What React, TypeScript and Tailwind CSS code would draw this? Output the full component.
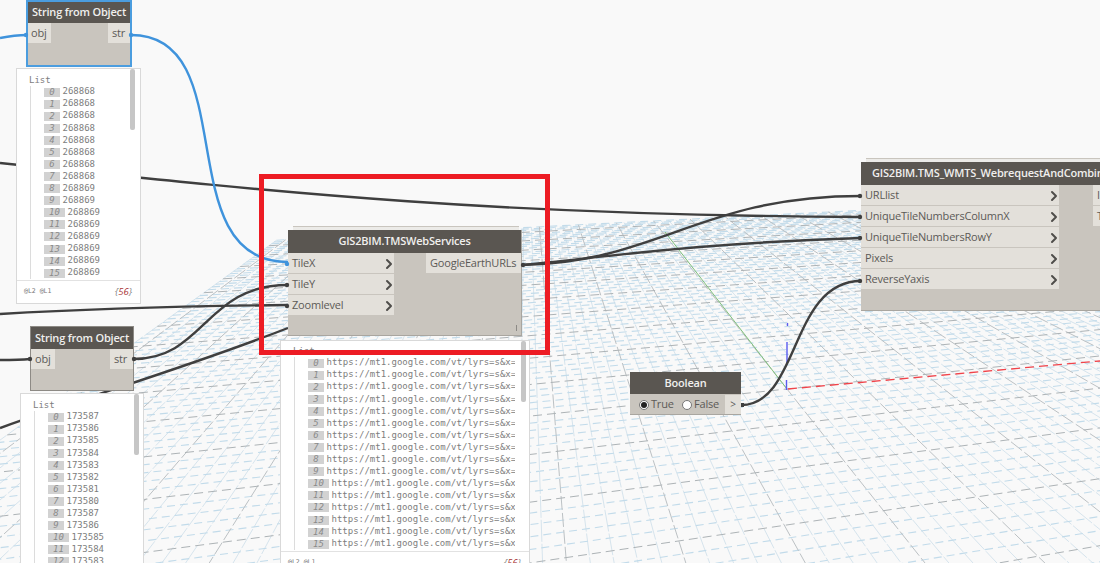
import { ChevronRight } from 'lucide-react';

const NODE_FONT = "font-['Open_Sans',sans-serif]";

// grid is a homography built from the two vanishing points of the 3D view
const ORIGIN = [787, 389];
const VP_A = [4000, 50];
const VP_B = [526, 60];
const ALPHA = 0.045;
const BETA = 0.09;

const project = (u: number, v: number) => {
  const a = ALPHA * u;
  const b = BETA * v;
  const d = 1 + a + b;
  return [
    (ORIGIN[0] + a * VP_A[0] + b * VP_B[0]) / d,
    (ORIGIN[1] + a * VP_A[1] + b * VP_B[1]) / d,
  ];
};

const U_MIN = -4.6;
const U_MAX = 12;
const V_MIN = -8;
const V_MAX = 11.6;

const seg = (a: number[], b: number[]) => `M${a[0].toFixed(1)} ${a[1].toFixed(1)}L${b[0].toFixed(1)} ${b[1].toFixed(1)}`;

const Grid = () => {
  const minorU: string[] = [];
  const majorU: string[] = [];
  const minorV: string[] = [];
  const majorV: string[] = [];
  for (let i = Math.ceil(U_MIN * 10); i <= U_MAX * 10; i++) {
    (i % 5 === 0 ? majorU : minorU).push(seg(project(i / 10, V_MIN), project(i / 10, V_MAX)));
  }
  for (let i = V_MIN * 5; i <= V_MAX * 5; i++) {
    (i % 5 === 0 ? majorV : minorV).push(seg(project(U_MIN, i / 5), project(U_MAX, i / 5)));
  }
  return (
    <svg className="absolute inset-0" width={1100} height={563} fill="none">
      <path d={minorU.join('')} stroke="#d6e4ed" strokeWidth={1} strokeDasharray="22 2" />
      <path d={minorV.join('')} stroke="#c2dbea" strokeWidth={1.1} strokeDasharray="8 5" />
      <path d={majorU.join('')} stroke="#bcc1c4" strokeWidth={1} strokeDasharray="14 3" />
      <path d={majorV.join('')} stroke="#adb3b6" strokeWidth={1} strokeDasharray="9 5" />
      {/* axes */}
      <path d="M787 389L665 232" stroke="#7fbf7a" strokeWidth={1} />
      <path d="M788 389L1100 361" stroke="#f0434a" strokeWidth={1.3} strokeDasharray="9 5" />
      <path d="M786.5 380V390M787 342V363M787.5 323V326" stroke="#5a5cf0" strokeWidth={1.4} />
    </svg>
  );
};

const Wires = () => (
  <svg className="absolute inset-0" width={1100} height={563} fill="none">
    <g stroke="#3f3f3f" strokeWidth={2.4}>
      <path d="M0 163C300 195 500 215 861 217" />
      <path d="M0 314C100 308 200 306 288 305" />
      <path d="M0 360C10 360 20 360 30 359" />
      <path d="M0 428C100 392 180 370 288 328" />
      <path d="M133 359C205 359 205 285 288 285" />
      <path d="M522 265C660 262 700 196 861 196" />
      <path d="M522 265C600 258 680 244 861 238" />
      <path d="M741 405C800 405 790 281 861 281" />
    </g>
    <g stroke="#3f93dc" strokeWidth={2.4}>
      <path d="M0 38C10 36 18 35 27 35" />
      <path d="M131 35C245 35 167 262 288 262" />
    </g>
  </svg>
);

// the little port stubs sit over the node edges
const PortDots = () => (
  <svg className="absolute inset-0" width={1100} height={563}>
    <g fill="#3f93dc">
      <circle cx={26} cy={35} r={2.2} />
      <circle cx={131} cy={35} r={2.2} />
      <circle cx={287} cy={264} r={2.2} />
    </g>
    <g fill="#3f3f3f">
      <circle cx={30} cy={359} r={2.2} />
      <circle cx={134} cy={359} r={2.2} />
      <circle cx={287} cy={285} r={2.2} />
      <circle cx={287} cy={306} r={2.2} />
      <circle cx={523} cy={265} r={2.2} />
      <circle cx={860} cy={196} r={2.2} />
      <circle cx={860} cy={217} r={2.2} />
      <circle cx={860} cy={238} r={2.2} />
      <circle cx={860} cy={281} r={2.2} />
      <rect x={741} y={403} width={3} height={4} />
    </g>
  </svg>
);

const PORT_TEXT = 'text-[11px] tracking-[-0.2px] text-[#5c5a57] pt-[1px]';

const InPort = ({ name, arrow = true, className = '' }: { name: string; arrow?: boolean; className?: string }) => (
  <div className={`flex items-center justify-between h-[20px] bg-[#e3e0da] pl-[4px] ${PORT_TEXT} ${className}`}>
    <span>{name}</span>
    {arrow && <ChevronRight size={16} strokeWidth={3} className="text-[#4f4d4a] -mr-[3px]" />}
  </div>
);

const OutPort = ({ name, className = '' }: { name: string; className?: string }) => (
  <div className={`flex items-center h-[20px] bg-[#e3e0da] px-[4px] whitespace-nowrap overflow-hidden ${PORT_TEXT} ${className}`}>{name}</div>
);

const Header = ({ title, className = '' }: { title: string; className?: string }) => (
  <div className={`bg-[#5a5651] text-[#f0efed] text-[11px] tracking-[-0.2px] font-semibold whitespace-nowrap flex items-center ${className}`}>{title}</div>
);

const StringFromObject = ({ className }: { className: string }) => (
  <div className={`absolute w-[104px] h-[65px] bg-[#c9c5be] ${NODE_FONT} ${className}`}>
    <Header title="String from Object" className="h-[22px] justify-center" />
    <div className="flex justify-between">
      <InPort name="obj" arrow={false} className="w-[24px]" />
      <OutPort name="str" className="w-[23px]" />
    </div>
  </div>
);

const Row = ({ index, value }: { index: number; value: string }) => (
  <div className="flex items-center h-[12.09px] whitespace-nowrap">
    <span className={`h-[9px] bg-[#d2d2d2] text-[#8a8a8a] italic flex items-center justify-center leading-none shrink-0 ${index > 9 ? 'w-[21px]' : 'w-[16px]'}`}>
      {index}
    </span>
    <span className="ml-[2.5px] text-[#7d7d7d]">{value}</span>
  </div>
);

const Watch = ({ values, className, thumb, clip, footer = true }: { values: string[]; className: string; thumb: string; clip: string; footer?: boolean }) => (
  <div className={`absolute bg-white border border-[#d9d9d9] overflow-hidden flex flex-col font-['DejaVu_Sans_Mono',monospace] text-[9px] ${className}`}>
    <div className="flex-1 min-h-0 pl-[12px] overflow-hidden">
      <div className={`overflow-hidden ${clip}`}>
        <div className="h-[12px] leading-[12px] text-[#7d7d7d]">List</div>
        <div className="border-l border-[#dcdcdc] ml-[1px] pl-[13px]">
          {values.map((v, i) => (
            <Row key={i} index={i} value={v} />
          ))}
        </div>
      </div>
    </div>
    <div className={`absolute top-0 w-[4.5px] h-[61px] bg-[#c6c6c6] rounded-[2px] ${thumb}`} />
    {footer && (
      <div className="h-[23px] shrink-0 border-t border-[#e2e2e2] flex items-center justify-between px-[7px] text-[#777]">
        <span className="text-[6.5px]">@L2 @L1</span>
        <span className={`${NODE_FONT} italic text-[9.5px] text-[#888] pr-[1px]`}>
          {'{'}
          <span className="text-[#a33]">56</span>
          {'}'}
        </span>
      </div>
    )}
  </div>
);

const COLUMNS = ['268868', '268868', '268868', '268868', '268868', '268868', '268868', '268868', '268869', '268869', '268869', '268869', '268869', '268869', '268869', '268869'];
const ROWS = ['173587', '173586', '173585', '173584', '173583', '173582', '173581', '173580', '173587', '173586', '173585', '173584', '173583'];
const URLS = Array.from({ length: 16 }, (_, i) => (i > 9 ? 'https://mt1.google.com/vt/lyrs=s&x' : 'https://mt1.google.com/vt/lyrs=s&x='));

export default function App() {
  return (
    <div className="relative w-[1100px] h-[563px] overflow-hidden bg-[#f9f9f9]">
      <Grid />
      <Wires />

      {/* String from Object, selected */}
      <StringFromObject className="left-[27px] top-[1px] outline-2 -outline-offset-1 outline-[#4b9ddf]" />
      <Watch values={COLUMNS} className="left-[16px] top-[68px] w-[125px] h-[236px] pt-[5px]" thumb="left-[113px]" clip="w-[110px]" />

      <StringFromObject className="left-[30px] top-[326px] border border-[#8d8a85]" />
      <Watch values={ROWS} className="left-[20px] top-[393px] w-[124px] h-[190px] pt-[5px]" thumb="left-[113px]" clip="w-[110px]" footer={false} />

      {/* TMSWebServices */}
      <div className={`absolute left-[288px] top-[230px] w-[234px] h-[106px] bg-[#c9c5be] border-b border-r border-[#a9a6a0] ${NODE_FONT}`}>
        <div className="absolute -top-[4px] left-[5px] right-[2px] h-[4px] border-t border-[#c9c5be] bg-[#ecebe8]" />
        <Header title="GIS2BIM.TMSWebServices" className="h-[23px] justify-center" />
        <div className="flex justify-between">
          <div className="flex flex-col gap-[1px] w-[106px]">
            <InPort name="TileX" />
            <InPort name="TileY" />
            <InPort name="Zoomlevel" />
          </div>
          <OutPort name="GoogleEarthURLs" className="w-[95px]" />
        </div>
        <span className="absolute right-[4px] bottom-[4px] w-[1px] h-[6px] bg-[#8c8a86]" />
      </div>
      <Watch values={URLS} className="left-[280px] top-[340px] w-[250px] h-[235px] pt-[4px]" thumb="left-[240px]" clip="w-[222px]" />

      {/* WebrequestAndCombine */}
      <div className={`absolute left-[861px] top-[162px] w-[400px] h-[149px] bg-[#c9c5be] border-b border-[#a9a6a0] ${NODE_FONT}`}>
        <div className="absolute -top-[4px] left-[5px] right-0 h-[4px] border-t border-[#c9c5be] bg-[#ecebe8]" />
        <Header title="GIS2BIM.TMS_WMTS_WebrequestAndCombineImages" className="h-[23px] pl-[11px]" />
        <div className="flex">
          <div className="flex flex-col gap-[1px] w-[198px]">
            <InPort name="URLlist" />
            <InPort name="UniqueTileNumbersColumnX" />
            <InPort name="UniqueTileNumbersRowY" />
            <InPort name="Pixels" />
            <InPort name="ReverseYaxis" />
          </div>
          <div className="flex flex-col gap-[1px] ml-[34px]">
            <OutPort name="Image" className="w-[60px]" />
            <OutPort name="TileCount" className="w-[60px]" />
          </div>
        </div>
      </div>

      {/* Boolean */}
      <div className={`absolute left-[630px] top-[372px] w-[111px] h-[43px] bg-[#c9c5be] border-b border-[#a9a6a0] ${NODE_FONT}`}>
        <Header title="Boolean" className="h-[22px] justify-center" />
        <div className={`flex items-center h-[20px] ${PORT_TEXT}`}>
          <span className="ml-[9px] w-[10px] h-[10px] rounded-full bg-white border border-[#777] flex items-center justify-center">
            <span className="w-[6px] h-[6px] rounded-full bg-[#222]" />
          </span>
          <span className="ml-[2px] w-[21px]">True</span>
          <span className="ml-[10px] w-[10px] h-[10px] rounded-full bg-white border border-[#777]" />
          <span className="ml-[2px]">False</span>
          <span className="ml-auto w-[16px] h-full bg-[#e3e0da] flex items-center justify-center text-[10px]">&gt;</span>
        </div>
      </div>

      <PortDots />

      {/* annotation */}
      <div className="absolute left-[259px] top-[174px] w-[291px] h-[181px] border-[5px] border-[#ed1c24]" />
    </div>
  );
}
